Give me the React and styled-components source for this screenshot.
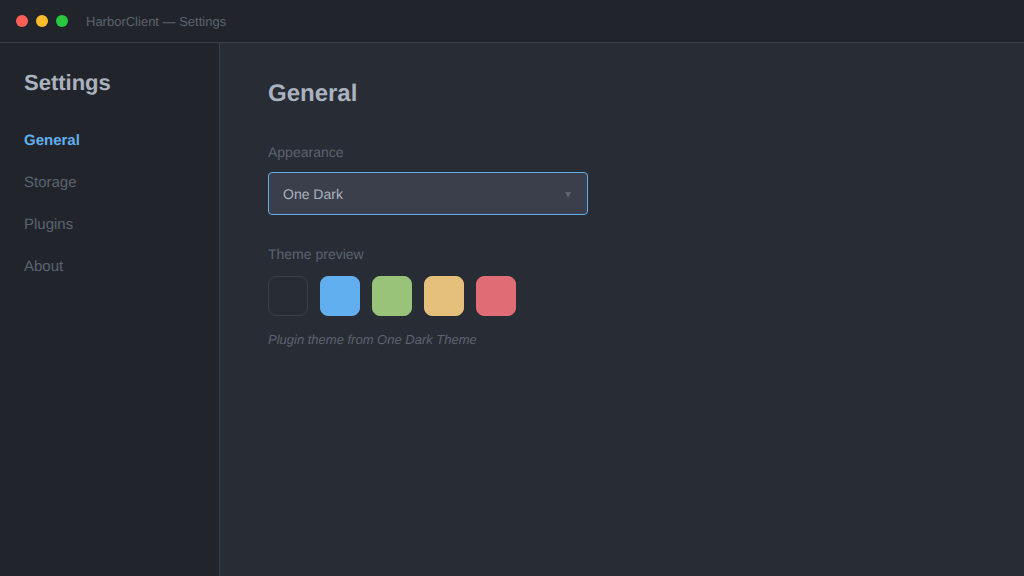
import styled, { createGlobalStyle } from "styled-components";

const GlobalStyle = createGlobalStyle`
	html, body {
		margin: 0;
		padding: 0;
		background: #282c34;
	}
	* {
		box-sizing: border-box;
	}
`;

const Page = styled.div`
	display: flex;
	flex-direction: column;
	width: 1024px;
	height: 576px;
	overflow: hidden;
	font-family: "Liberation Sans", Arial, sans-serif;
	text-rendering: geometricPrecision;
	background: #282c34;
`;

const TitleBar = styled.header`
	display: flex;
	align-items: center;
	flex-shrink: 0;
	height: 43px;
	padding: 0 16px;
	background: #21252b;
	border-bottom: 1px solid #3a3f4b;
`;

const Light = styled.span`
	width: 12px;
	height: 12px;
	margin-right: 8px;
	border-radius: 50%;
	background: ${props => props.$color};
`;

const WindowTitle = styled.span`
	margin-left: 10px;
	font-size: 13px;
	color: #5c6370;
`;

const Body = styled.div`
	display: flex;
	flex: 1;
	min-height: 0;
`;

const Sidebar = styled.nav`
	flex-shrink: 0;
	width: 220px;
	padding: 24px 0;
	background: #21252b;
	border-right: 1px solid #3a3f4b;
`;

const SidebarTitle = styled.h2`
	margin: 0 0 21px;
	padding: 0 24px;
	font-size: 22px;
	line-height: 32px;
	font-weight: 700;
	color: #abb2bf;
`;

const NavItem = styled.div`
	height: 42px;
	padding: 0 24px;
	font-size: 15px;
	line-height: 42px;
	font-weight: ${props => (props.$active ? 700 : 400)};
	color: ${props => (props.$active ? "#61afef" : "#5c6370")};
`;

const Main = styled.main`
	flex: 1;
	padding: 33px 48px;
`;

const Heading = styled.h1`
	margin: 0 0 30px;
	font-size: 24px;
	line-height: 36px;
	font-weight: 700;
	color: #abb2bf;
`;

const FieldLabel = styled.div`
	margin-bottom: ${props => props.$gap}px;
	font-size: 14px;
	line-height: 20px;
	color: #5c6370;
`;

const Select = styled.div`
	display: flex;
	align-items: center;
	justify-content: space-between;
	width: 320px;
	height: 43px;
	margin-bottom: 29px;
	padding: 0 16px 0 14px;
	font-size: 14px;
	color: #abb2bf;
	background: #3a3f4b;
	border: 1px solid #61afef;
	border-radius: 4px;
`;

const Caret = styled.span`
	font-size: 12px;
	color: #5c6370;
`;

const Swatches = styled.div`
	display: flex;
	gap: 12px;
	margin-bottom: 14px;
`;

const Swatch = styled.div`
	width: 40px;
	height: 40px;
	border-radius: 8px;
	background: ${props => props.$color};
	border: 1px solid ${props => (props.$outlined ? "#3a3f4b" : props.$color)};
`;

const Note = styled.p`
	margin: 0;
	font-size: 13px;
	line-height: 20px;
	font-style: italic;
	color: #5c6370;
`;

const NAV = ["General", "Storage", "Plugins", "About"];
const LIGHTS = ["#ff5f57", "#ffbd2e", "#28c840"];
const COLORS = ["#61afef", "#98c379", "#e5c07b", "#e06c75"];

export default function App() {
	return <>
		<GlobalStyle />
		<Page>
			<TitleBar>
				{LIGHTS.map(c => (<Light key={c} $color={c} />))}
				<WindowTitle>HarborClient — Settings</WindowTitle>
			</TitleBar>
			<Body>
				<Sidebar>
					<SidebarTitle>Settings</SidebarTitle>
					{NAV.map((n, idx) => (<NavItem key={n} $active={idx === 0}>{n}</NavItem>))}
				</Sidebar>
				<Main>
					<Heading>General</Heading>
					<FieldLabel $gap={10}>Appearance</FieldLabel>
					<Select>
						One Dark
						<Caret>▾</Caret>
					</Select>
					<FieldLabel $gap={12}>Theme preview</FieldLabel>
					<Swatches>
						<Swatch $color="#282c34" $outlined />
						{COLORS.map(c => (<Swatch key={c} $color={c} />))}
					</Swatches>
					<Note>Plugin theme from One Dark Theme</Note>
				</Main>
			</Body>
		</Page>
	</>;
}
